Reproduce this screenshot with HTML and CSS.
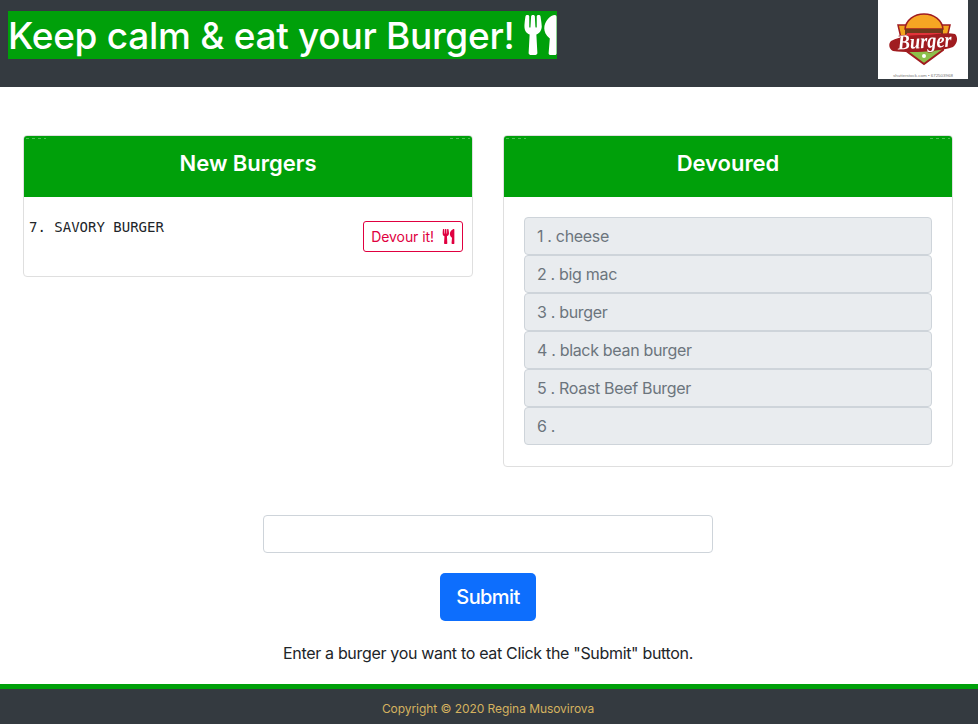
FILE: index.html
```html
<!DOCTYPE html>
<html lang="en">
<head>
<meta charset="utf-8">
<title>Burger</title>
<link rel="stylesheet" href="styles.css">
</head>
<body>
<header class="top">
  <h1 class="title"><span class="title-mark">Keep calm &amp; eat your Burger! <svg class="cutlery cutlery-lg" viewBox="0 0 416 512"><use href="#cutlery"/></svg></span></h1>
  <div class="logo">
    <svg viewBox="0 0 90 79" width="90" height="79">
      <g class="logo-art">
        <path d="M20 25h8v13h-5zM64 25h8l-3 13h-5z" fill="#f2a51f" stroke="#a01c20" stroke-width="1.500"/>
        <path d="M27 46h38v4L46 64 27 50z" fill="#8cc04b" stroke="#a01c20" stroke-width="2"/>
        <path d="M27 29c1-9 9-15 19-15s18 6 19 15z" fill="#f6a623" stroke="#a01c20" stroke-width="1.500"/>
        <rect x="27" y="29" width="38" height="5" fill="#6f3a1c"/>
        <rect x="29" y="33" width="34" height="4" fill="#e2333a"/>
        <path d="M13 41c10-5 20-6 33-6 12 0 22-3 31-1 3 3 3 9-2 13-14 5-44 6-60 4-4-2-5-7-2-10z" fill="#a01c20"/>
        <circle cx="46" cy="56" r="2" fill="#fff"/>
        <text class="logo-word" x="47" y="48" text-anchor="middle" textLength="54" lengthAdjust="spacingAndGlyphs" transform="rotate(-3 47 48)">Burger</text>
      </g>
      <text class="logo-credit" x="45" y="77" text-anchor="middle" textLength="60" lengthAdjust="spacingAndGlyphs">shutterstock.com • 672503968</text>
    </svg>
  </div>
</header>

<main class="content">
  <div class="columns">
    <section class="card">
      <h2 class="card-head">New Burgers</h2>
      <div class="card-body new-body">
        <pre class="burger-name">7. SAVORY BURGER</pre>
        <div class="action"><button class="devour" type="button">Devour it! <svg class="cutlery cutlery-sm" viewBox="0 0 416 512"><use href="#cutlery"/></svg></button></div>
      </div>
    </section>
    <section class="card">
      <h2 class="card-head">Devoured</h2>
      <div class="card-body list-body">
        <ul class="list">
          <li>1 . cheese</li>
          <li>2 . big mac</li>
          <li>3 . burger</li>
          <li>4 . black bean burger</li>
          <li>5 . Roast Beef Burger</li>
          <li>6 .</li>
        </ul>
      </div>
    </section>
  </div>

  <form class="entry">
    <input class="entry-input" type="text" aria-label="Burger name">
    <button class="submit" type="button">Submit</button>
    <p class="hint">Enter a burger you want to eat Click the "Submit" button.</p>
  </form>
</main>

<footer class="foot">Copyright © 2020 Regina Musovirova</footer>

<svg class="defs" width="0" height="0" aria-hidden="true">
  <symbol id="cutlery" viewBox="0 0 416 512">
    <path fill="currentColor" d="M207.900 15.200c.8 4.700 16.100 94.500 16.100 128.800 0 52.300-27.800 89.600-68.900 104.600L168 486.700c.7 13.700-10.200 25.300-24 25.300H80c-13.700 0-24.700-11.500-24-25.300l12.900-238.100C27.700 233.600 0 196.200 0 144 0 109.600 15.300 19.900 16.100 15.200 19.300-5.100 61.400-5.400 64 16.300v141.200c1.300 3.400 15.100 3.200 16 0 1.400-25.300 7.900-139.200 8-141.800 3.300-20.800 44.700-20.800 47.900 0 .2 2.700 6.600 116.500 8 141.800.9 3.200 14.800 3.400 16 0V16.300c2.600-21.600 44.800-21.400 48-1.100zm119.200 285.700l-15 185.100c-1.200 14 9.900 26 23.900 26h56c13.300 0 24-10.700 24-24V24c0-13.200-10.700-24-24-24-82.500 0-221.400 178.500-64.900 300.900z"/>
  </symbol>
</svg>
</body>
</html>
```

FILE: styles.css
```css
* { box-sizing: border-box; }
html, body { margin: 0; padding: 0; }
body {
  width: 978px;
  height: 724px;
  display: flex;
  flex-direction: column;
  background: #fff;
  color: #212529;
  font-family: Inter, "Liberation Sans", sans-serif;
  font-size: 16px;
  line-height: 1.5;
  overflow: hidden;
}
.defs { position: absolute; }
.top {
  height: 87px;
  flex: none;
  background: #343a40;
  display: flex;
  justify-content: space-between;
  align-items: flex-start;
  padding: 0 10px 0 8px;
}
.title {
  margin: 11px 0 0;
  font-size: 37px;
  font-weight: 500;
  line-height: 50px;
  letter-spacing: -0.28px;
  color: #fff;
}
.title-mark {
  display: inline-block;
  background: #00a00a;
  height: 48px;
  white-space: nowrap;
}
.cutlery { display: inline-block; fill: currentColor; }
.cutlery-lg { width: 33px; height: 40px; vertical-align: -6px; }
.cutlery-sm { width: 13px; height: 15px; vertical-align: -2px; margin-left: 4px; }
.logo {
  width: 90px;
  height: 79px;
  background: #fff;
  flex: none;
}
.logo svg { display: block; }
.logo-art { filter: blur(0.35px); }
.logo-word {
  font-family: "Liberation Serif", serif;
  font-style: italic;
  font-weight: 700;
  font-size: 21px;
  fill: #fff;
  stroke: #a01c20;
  stroke-width: 1px;
  paint-order: stroke;
}
.logo-credit { font-family: "Liberation Sans", sans-serif; font-size: 4px; fill: #777; }
.content { flex: 1; display: flex; flex-direction: column; }
.columns {
  display: grid;
  grid-template-columns: 450px 450px;
  column-gap: 30px;
  align-items: start;
  padding: 48px 25px 0 23px;
}
.card {
  border: 1px solid #dfdfdf;
  border-radius: 4px;
  overflow: hidden;
  background: #fff;
}
.card-head {
  position: relative;
  margin: 0;
  height: 61px;
  background: #00a00a;
  color: #fff;
  font-size: 22px;
  font-weight: 600;
  line-height: 54px;
  letter-spacing: -0.03px;
  text-align: center;
}
.card-head::before,
.card-head::after {
  content: "";
  position: absolute;
  top: 2px;
  width: 20px;
  height: 1px;
  opacity: 0.3;
  background-image:
    repeating-linear-gradient(90deg, #fff 0 3px, transparent 3px 6px);
}
.card-head::before { left: 2px; }
.card-head::after { right: 2px; }
.new-body { height: 79px; padding: 16px 9px 0 5px; display: flex; flex-direction: column; }
.burger-name {
  margin: 0;
  font-family: "DejaVu Sans Mono", monospace;
  font-size: 14px;
  line-height: 28px;
  height: 8px;
}
.action { display: flex; justify-content: flex-end; }
.devour {
  height: 31px;
  width: 100px;
  padding: 0;
  border: 1px solid #e00040;
  border-radius: 3px;
  background: #fff;
  color: #e00040;
  font-family: inherit;
  font-size: 14px;
  letter-spacing: -0.08px;
}
.list-body { padding: 20px 20px 21px; }
.list { margin: 0; padding: 0; list-style: none; }
.list li {
  height: 38px;
  padding: 0 12px;
  background: #e9ecef;
  border: 1px solid #ced4da;
  border-radius: 4px;
  color: #6c757d;
  line-height: 36px;
  letter-spacing: -0.32px;
}
.entry { display: flex; flex-direction: column; align-items: center; margin-top: 48px; padding-right: 2px; }
.entry-input {
  width: 450px;
  height: 38px;
  border: 1px solid #ced4da;
  border-radius: 4px;
  background: #fff;
}
.submit {
  margin-top: 20px;
  width: 96px;
  height: 48px;
  border: 0;
  border-radius: 5px;
  background: #0d6efd;
  color: #fff;
  font-family: inherit;
  font-size: 20px;
  font-weight: 500;
  letter-spacing: -0.6px;
}
.hint { margin: 20px 0 0; font-size: 16px; line-height: 24px; letter-spacing: -0.32px; }
.foot {
  height: 40px;
  flex: none;
  padding-right: 2px;
  background: #343a40;
  border-top: 5px solid #00a00a;
  color: #d4b25f;
  font-size: 12px;
  line-height: 39px;
  letter-spacing: -0.06px;
  text-align: center;
}
```
